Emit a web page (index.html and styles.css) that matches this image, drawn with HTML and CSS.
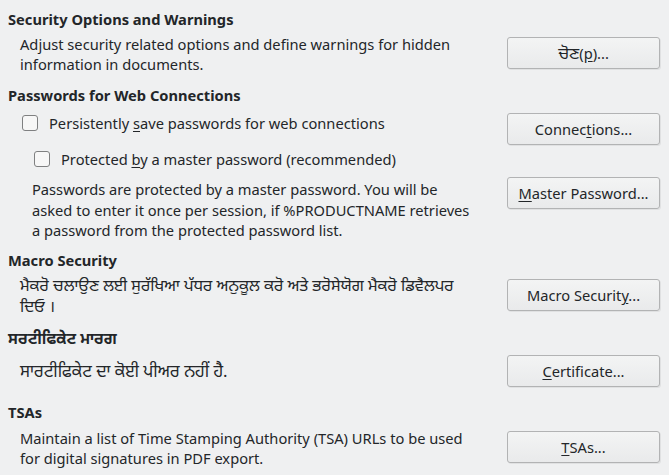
FILE: index.html
```html
<!DOCTYPE html>
<html lang="pa">
<head>
<meta charset="utf-8">
<title>Security</title>
<link rel="stylesheet" href="styles.css">
</head>
<body>
<div class="page">
  <h2 class="head h-sec">Security Options and Warnings</h2>
  <div class="row row-top row-sec">
    <p class="desc">Adjust security related options and define warnings for hidden<br>information in documents.</p>
    <button class="btn btn-sec"><span class="pa">ਚੋਣ</span>(<u>p</u>)...</button>
  </div>

  <h2 class="head h-pw">Passwords for Web Connections</h2>
  <div class="row row-top row-persist">
    <label class="check check-1"><span class="box"></span><span>Persistently <u>s</u>ave passwords for web connections</span></label>
    <button class="btn">Connec<u>t</u>ions...</button>
  </div>
  <label class="check check-2"><span class="box"></span><span>Protected <u>b</u>y a master password (recommended)</span></label>
  <div class="row row-top row-master">
    <p class="desc desc-pw">Passwords are protected by a master password. You will be<br>asked to enter it once per session, if %PRODUCTNAME retrieves<br>a password from the protected password list.</p>
    <button class="btn"><u>M</u>aster Password...</button>
  </div>

  <h2 class="head h-macro">Macro Security</h2>
  <div class="row row-top row-macro">
    <p class="desc pa desc-macro">ਮੈਕਰੋ ਚਲਾਉਣ ਲਈ ਸੁਰੱਖਿਆ ਪੱਧਰ ਅਨੁਕੂਲ ਕਰੋ ਅਤੇ ਭਰੋਸੇਯੋਗ ਮੈਕਰੋ ਡਿਵੈਲਪਰ<br>ਦਿਓ ।</p>
    <button class="btn btn-macro">Macro Securit<u>y</u>...</button>
  </div>

  <h2 class="head h-cert pa">ਸਰਟੀਫਿਕੇਟ ਮਾਰਗ</h2>
  <div class="row row-cert">
    <p class="desc pa desc-cert">ਸਾਰਟੀਫਿਕੇਟ ਦਾ ਕੋਈ ਪੀਅਰ ਨਹੀਂ ਹੈ.</p>
    <button class="btn"><u>C</u>ertificate...</button>
  </div>

  <h2 class="head h-tsa">TSAs</h2>
  <div class="row row-top row-tsa">
    <p class="desc">Maintain a list of Time Stamping Authority (TSA) URLs to be used<br>for digital signatures in PDF export.</p>
    <button class="btn btn-tsa"><u>T</u>SAs...</button>
  </div>
</div>
</body>
</html>
```

FILE: styles.css
```css
html, body {
  margin: 0;
  padding: 0;
  background: #eff0f1;
}

body {
  font-family: "Noto Sans", "Noto Sans Gurmukhi", "Lohit Gurmukhi", "Open Sans", "DejaVu Sans", sans-serif;
  font-size: 14.67px;
  line-height: 20px;
  color: #232629;
}

.page {
  width: 669px;
  height: 475px;
  box-sizing: border-box;
  padding: 9px 9px 0 8px;
  overflow: hidden;
}

.head {
  margin: 0;
  height: 20px;
  font-size: 14.67px;
  font-weight: bold;
  line-height: 20px;
  white-space: nowrap;
}

.pa {
  font-size: 16.5px;
  line-height: 20px;
}

.head.pa {
  font-size: 15.6px;
}

.row {
  display: flex;
  align-items: center;
  justify-content: space-between;
}

.row-top {
  align-items: flex-start;
}

.desc {
  margin: 0;
  padding-left: 12px;
  white-space: nowrap;
}

.desc-pw {
  padding-left: 24px;
  padding-top: 2px;
  line-height: 20.5px;
}

.desc-macro {
  font-size: 16.1px;
  line-height: 21px;
}

.desc-cert {
  font-size: 16.8px;
}

.btn {
  flex: none;
  box-sizing: border-box;
  width: 153px;
  height: 32px;
  padding: 0 6px;
  border: 1px solid #b2b3b4;
  border-radius: 3px;
  background: linear-gradient(#f3f4f4, #e9eaeb);
  box-shadow: 1px 1px 0 rgba(0, 0, 0, 0.06);
  font: inherit;
  color: #232629;
  text-align: center;
}

.btn-sec { margin-top: 3px; }
.btn-macro { margin-top: 4px; }
.btn-tsa { margin-top: 3px; }

.btn u, .check u {
  text-underline-offset: 2px;
}

.check {
  display: flex;
  align-items: center;
  gap: 11px;
  height: 20px;
  white-space: nowrap;
}

.check-1 {
  padding-left: 14px;
}

.check-2 {
  padding-left: 26px;
  margin-top: 4px;
}

.box {
  flex: none;
  box-sizing: border-box;
  width: 16px;
  height: 16px;
  border: 1px solid #7f8081;
  border-radius: 3px;
  background: #f7f7f7;
}

.row-sec { margin-top: 5px; height: 40px; }
.h-pw { margin-top: 11px; }
.row-persist { margin-top: 8px; height: 32px; }
.row-master { margin-top: 8px; height: 64px; }
.h-macro { margin-top: 9px; }
.row-macro { margin-top: 5px; height: 42px; }
.h-cert { margin-top: 11px; }
.row-cert { margin-top: 7px; height: 32px; }
.h-tsa { margin-top: 15px; }
.row-tsa { margin-top: 6px; height: 40px; }
```
